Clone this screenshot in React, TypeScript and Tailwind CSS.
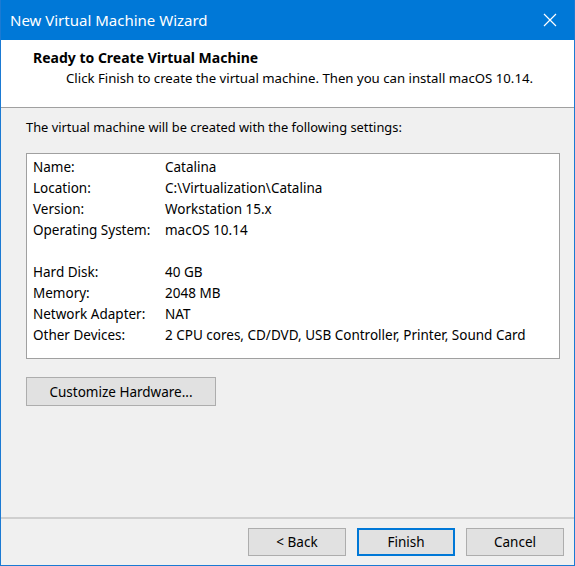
const FONT = { fontFamily: '"Noto Sans", "Open Sans", sans-serif' };

const settings: [string, string][] = [
  ["Name:", "Catalina"],
  ["Location:", "C:\\Virtualization\\Catalina"],
  ["Version:", "Workstation 15.x"],
  ["Operating System:", "macOS 10.14"],
  ["", ""],
  ["Hard Disk:", "40 GB"],
  ["Memory:", "2048 MB"],
  ["Network Adapter:", "NAT"],
  ["Other Devices:", "2 CPU cores, CD/DVD, USB Controller, Printer, Sound Card"],
];

function WinButton({ label, primary }: { label: string; primary?: boolean }) {
  return (
    <button
      type="button"
      className={
        primary
          ? "h-[28px] w-[98px] border-2 border-[#0078d7] bg-[#e1e1e1] pt-[1px] text-[13.5px] text-black"
          : "h-[28px] w-[98px] border border-[#adadad] bg-[#e1e1e1] pt-[1px] text-[13.5px] text-black"
      }
    >
      {label}
    </button>
  );
}

export default function App() {
  return (
    <div
      className="flex h-[566px] w-[575px] flex-col border-x border-b border-[#1b7ad3] bg-[#f0f0f0] text-black"
      style={FONT}
    >
      <div className="flex h-[40px] shrink-0 items-center justify-between bg-[#0078d7] pl-[9px] pr-[17px] text-white">
        <span className="text-[15px]">New Virtual Machine Wizard</span>
        <svg width="14" height="14" viewBox="0 0 14 14" aria-hidden="true">
          <path d="M1 1 L13 13 M13 1 L1 13" stroke="white" strokeWidth="1.2" fill="none" />
        </svg>
      </div>

      <div className="h-[68px] shrink-0 border-b border-[#a0a0a0] bg-white pt-[7px]">
        <div className="pl-[32px] text-[14px] font-bold leading-[21px]">Ready to Create Virtual Machine</div>
        <div className="pl-[65px] text-[13.2px] leading-[21px]">
          Click Finish to create the virtual machine. Then you can install macOS 10.14.
        </div>
      </div>

      <div className="flex-1 border-b-2 border-[#cfcfcf] pl-[25px] pr-[14px] pt-[9px]">
        <p className="pb-[15px] text-[12.85px] leading-[21px]">
          The virtual machine will be created with the following settings:
        </p>
        <div className="h-[206px] border border-[#a0a0a0] bg-white pl-[6px] pt-[3px]">
          {settings.map(([k, v], i) => (
            <div key={i} className="flex h-[21px] items-center text-[13.5px]">
              <span className="w-[132px] shrink-0">{k}</span>
              <span>{v}</span>
            </div>
          ))}
        </div>
        <button
          type="button"
          className="mt-[18px] h-[29px] w-[190px] border border-[#adadad] bg-[#e1e1e1] pt-[1px] text-[13.5px]"
        >
          Customize Hardware...
        </button>
      </div>

      <div className="flex h-[46px] shrink-0 justify-end gap-[11px] pr-[10px] pt-[9px]">
        <WinButton label="< Back" />
        <WinButton label="Finish" primary />
        <WinButton label="Cancel" />
      </div>
    </div>
  );
}
